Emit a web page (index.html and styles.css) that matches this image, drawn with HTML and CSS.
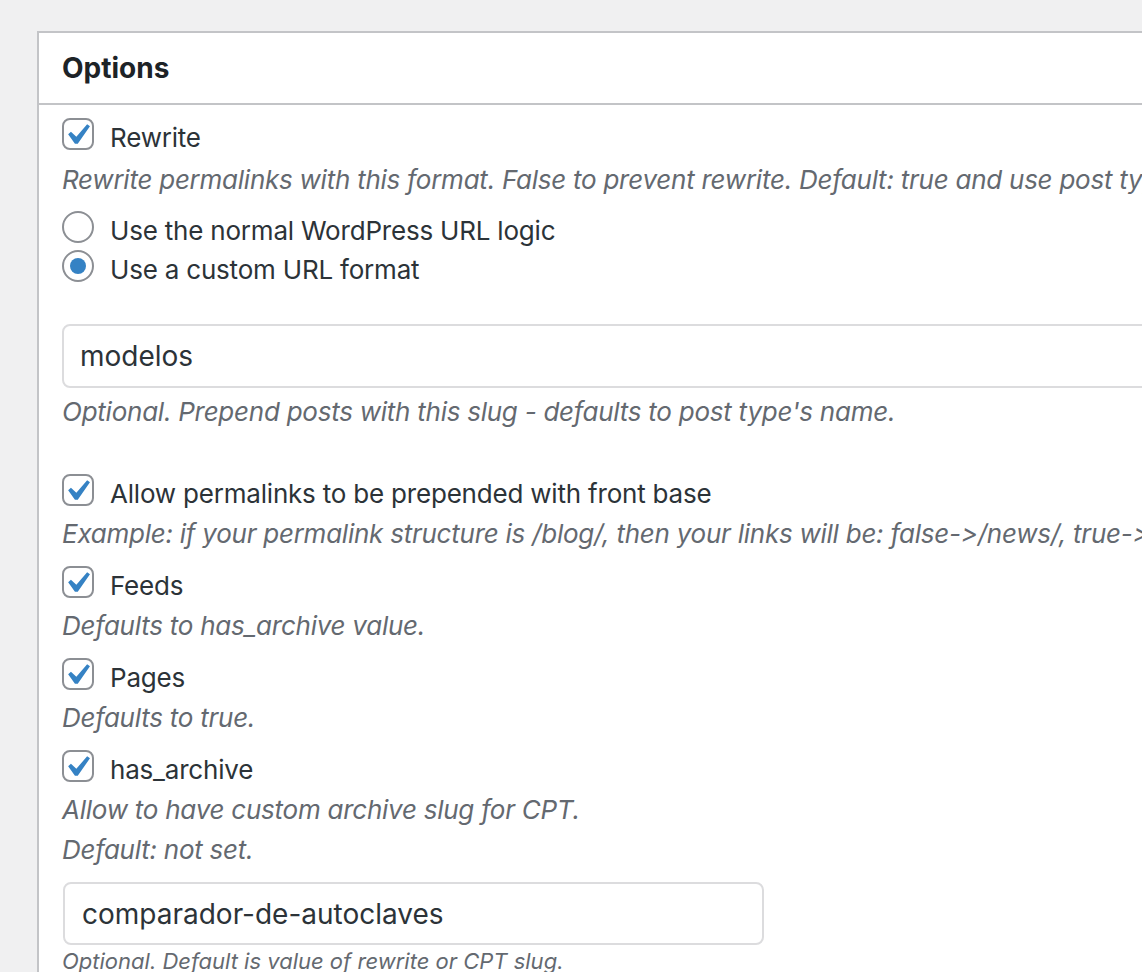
FILE: index.html
```html
<!DOCTYPE html>
<html>
<head>
    <meta charset='utf-8' />
    <title>Options</title>
    <link rel="stylesheet" href="styles.css">
</head>
<body>
    <div class='postbox'>
        <div class='postbox-header'>
            <h2>Options</h2>
        </div>
        <div class='inside'>

            <label class='field-check'>
                <span class='checkbox is-checked'><svg viewBox='0 0 20 20'><path d='M14.83 4.89l1.34.94-5.81 8.38H9.02L5.78 9.67l1.34-1.25 2.57 2.4z'/></svg></span>
                <span class='label-text'>Rewrite</span>
            </label>
            <p class='desc desc-first'>Rewrite permalinks with this format. False to prevent rewrite. Default: true and use post type slug.</p>

            <div class='radio-group'>
                <label class='field-check'><span class='radio'></span><span class='label-text'>Use the normal WordPress URL logic</span></label>
                <label class='field-check'><span class='radio is-checked'></span><span class='label-text'>Use a custom URL format</span></label>
            </div>

            <input class='text-input' type='text' value='modelos' />
            <p class='desc desc-after-input'>Optional. Prepend posts with this slug - defaults to post type's name.</p>

            <label class='field-check field-gap'>
                <span class='checkbox is-checked'><svg viewBox='0 0 20 20'><path d='M14.83 4.89l1.34.94-5.81 8.38H9.02L5.78 9.67l1.34-1.25 2.57 2.4z'/></svg></span>
                <span class='label-text'>Allow permalinks to be prepended with front base</span>
            </label>
            <p class='desc'>Example: if your permalink structure is /blog/, then your links will be: false-&gt;/news/, true-&gt;/blog/news/. Default: true.</p>

            <label class='field-check'>
                <span class='checkbox is-checked'><svg viewBox='0 0 20 20'><path d='M14.83 4.89l1.34.94-5.81 8.38H9.02L5.78 9.67l1.34-1.25 2.57 2.4z'/></svg></span>
                <span class='label-text'>Feeds</span>
            </label>
            <p class='desc'>Defaults to has_archive value.</p>

            <label class='field-check'>
                <span class='checkbox is-checked'><svg viewBox='0 0 20 20'><path d='M14.83 4.89l1.34.94-5.81 8.38H9.02L5.78 9.67l1.34-1.25 2.57 2.4z'/></svg></span>
                <span class='label-text'>Pages</span>
            </label>
            <p class='desc'>Defaults to true.</p>

            <label class='field-check'>
                <span class='checkbox is-checked'><svg viewBox='0 0 20 20'><path d='M14.83 4.89l1.34.94-5.81 8.38H9.02L5.78 9.67l1.34-1.25 2.57 2.4z'/></svg></span>
                <span class='label-text'>has_archive</span>
            </label>
            <p class='desc'>Allow to have custom archive slug for CPT.<br>Default: not set.</p>

            <input class='text-input text-input-short' type='text' value='comparador-de-autoclaves' />
            <p class='desc desc-small'>Optional. Default is value of rewrite or CPT slug.</p>

        </div>
    </div>
</body>
</html>
```

FILE: styles.css
```css
html, body {
    margin: 0;
    padding: 0;
}

body {
    background: #f0f0f1;
    padding-top: 31px;
    overflow: hidden;
    font-family: 'Inter', 'Liberation Sans', sans-serif;
    font-size: 26px;
    font-variant-ligatures: none;
    font-feature-settings: "calt" 0;
    color: #2c3338;
}

.postbox {
    margin-left: 37px;
    width: 1200px;
    background: #fff;
    border: 2px solid #c3c4c7;
    overflow: hidden;
}

.postbox-header {
    height: 70px;
    display: flex;
    align-items: center;
    padding: 0 23px;
    border-bottom: 2px solid #c3c4c7;
}

.postbox-header h2 {
    margin: 0;
    font-size: 28px;
    font-weight: 700;
    color: #1d2327;
}

.inside {
    padding: 13px 23px 20px 23px;
}

.field-check {
    display: flex;
    align-items: center;
    gap: 16px;
    height: 32px;
    line-height: 32px;
    white-space: nowrap;
}

.label-text {
    margin-top: 8px;
    letter-spacing: -0.2px;
}

.field-gap {
    margin-top: 42px;
}

.checkbox,
.radio {
    position: relative;
    flex: none;
    box-sizing: border-box;
    width: 32px;
    height: 32px;
    border: 2px solid #8c8f94;
    background: #fff;
}

.checkbox {
    border-radius: 8px;
}

.checkbox svg {
    position: absolute;
    left: -8px;
    top: -6px;
    width: 42px;
    height: 42px;
    fill: #3582c4;
}

.radio {
    border-radius: 50%;
}

.radio.is-checked::before {
    content: '';
    position: absolute;
    left: 6px;
    top: 6px;
    width: 16px;
    height: 16px;
    border-radius: 50%;
    background: #3582c4;
}

.desc {
    margin: 8px 0 12px 0;
    font-style: italic;
    line-height: 40px;
    letter-spacing: -0.25px;
    color: #646970;
    white-space: nowrap;
}

.desc-first {
    margin: 10px 0 11px 0;
}

.radio-group {
    display: flex;
    flex-direction: column;
    gap: 7px;
}

.text-input {
    display: block;
    box-sizing: border-box;
    width: 100%;
    height: 64px;
    margin: 42px 0 0 0;
    padding: 0 16px;
    border: 2px solid #dcdcde;
    border-radius: 8px;
    font-family: 'Inter', 'Liberation Sans', sans-serif;
    font-size: 28px;
    color: #2c3338;
    background: #fff;
}

.desc-after-input {
    margin-top: 4px;
}

.text-input-short {
    width: 701px;
    height: 63px;
    margin: 8px 0 0 1px;
    padding: 0 17px;
}

.desc-small {
    margin: 1px 0 0 0;
    font-size: 22px;
    line-height: 30px;
    letter-spacing: 0;
}
```
